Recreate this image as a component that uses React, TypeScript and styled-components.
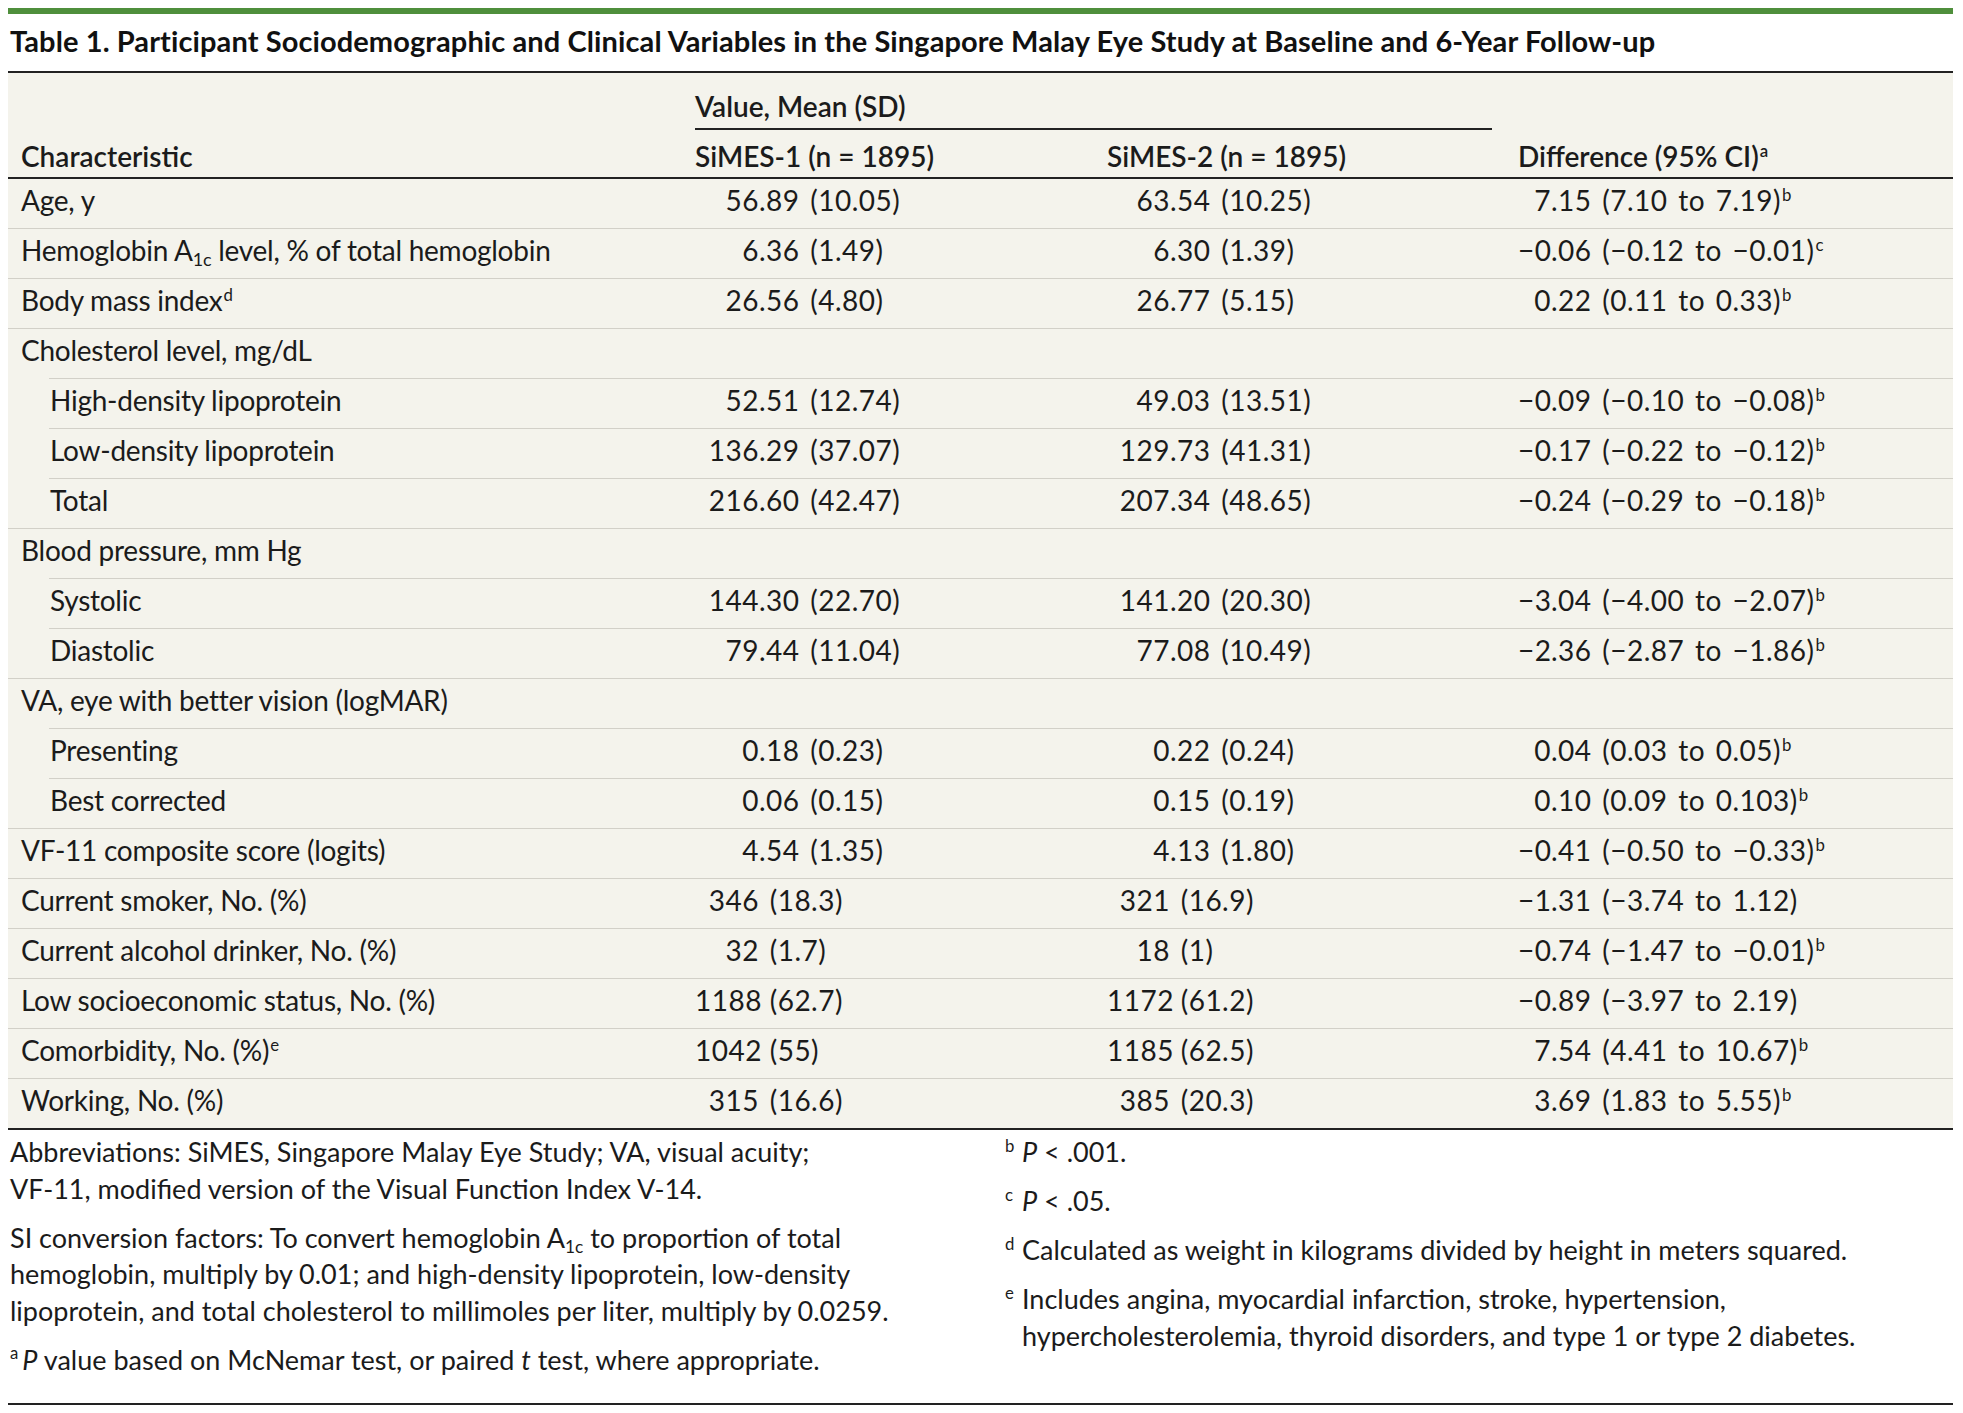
import React from "react";
import styled, { createGlobalStyle } from "styled-components";

const GlobalStyle = createGlobalStyle`
  html, body { margin: 0; padding: 0; background: #ffffff; }
  body {
    font-family: Lato, "Liberation Sans", sans-serif;
    color: #1b1b1b;
    -webkit-font-smoothing: antialiased;
  }
`;

const Page = styled.div`
  width: 1945px;
  margin-left: 8px;
  padding-top: 8px;
`;

const AccentBar = styled.div`
  height: 6px;
  background: #4f8f3c;
`;

const Title = styled.h1`
  margin: 10px 0 0 2px;
  font-size: 29px;
  line-height: 34px;
  font-weight: 700;
  letter-spacing: 0.1px;
  color: #111;
`;

const Table = styled.div`
  margin-top: 13px;
  border-top: 2px solid #222;
  border-bottom: 2px solid #222;
  background: #f4f3ec;
`;

const COLS = "687px 412px 411px 1fr";

const HeadGrid = styled.div`
  display: grid;
  grid-template-columns: ${COLS};
  grid-template-rows: auto auto;
  padding: 16px 0 4px;
  border-bottom: 2px solid #222;
  font-size: 28px;
  line-height: 34px;
  font-weight: 600;
`;

const SpanHead = styled.div`
  grid-column: 2 / span 2;
  grid-row: 1;
  margin-right: 26px;
  padding-bottom: 5px;
  border-bottom: 2px solid #222;
`;

const HeadLabel = styled.div<{ $col: number; $pad?: number }>`
  grid-column: ${(p) => p.$col};
  grid-row: 2;
  margin-top: 9px;
  padding-left: ${(p) => p.$pad ?? 0}px;
  white-space: nowrap;
`;

const RowRule = styled.div<{ $indent: boolean }>`
  height: 1px;
  margin-left: ${(p) => (p.$indent ? 41 : 0)}px;
  background: #d2d0c8;
`;

const RowGrid = styled.div`
  display: grid;
  grid-template-columns: ${COLS};
  align-items: center;
  height: 49px;
  box-sizing: border-box;
  padding-bottom: 7px;
  font-size: 28px;
  line-height: 34px;
  white-space: nowrap;
`;

const LabelCell = styled.div<{ $indent: boolean }>`
  padding-left: ${(p) => (p.$indent ? 42 : 13)}px;
  letter-spacing: -0.25px;
`;

const ValueCell = styled.div`
  display: flex;
  align-items: baseline;
  letter-spacing: 0.5px;
  word-spacing: 3px;
`;

const IntPart = styled.span<{ $w: number }>`
  display: inline-block;
  width: ${(p) => p.$w}px;
  text-align: right;
`;

const RestText = styled.span`
  white-space: pre;
`;

const Sup = styled.sup`
  font-size: 0.6em;
  line-height: 0;
  vertical-align: 0.62em;
  margin-left: 1px;
  letter-spacing: 0;
`;

const Sub = styled.sub`
  font-size: 0.64em;
  line-height: 0;
  vertical-align: -0.28em;
`;

const Notes = styled.div`
  display: grid;
  grid-template-columns: 997px 1fr;
  padding: 4px 0 25px;
  border-bottom: 2px solid #222;
  font-size: 27px;
  line-height: 36.5px;
`;

const NoteCol = styled.div<{ $pad: number }>`
  padding-left: ${(p) => p.$pad}px;
  display: flex;
  flex-direction: column;
  gap: 12.5px;
`;

const Note = styled.p<{ $hang?: boolean }>`
  margin: 0;
  white-space: nowrap;
  padding-left: ${(p) => (p.$hang ? 17 : 0)}px;
  text-indent: ${(p) => (p.$hang ? -17 : 0)}px;
`;

const Mark = styled.sup`
  display: inline-block;
  width: 17px;
  text-indent: 0;
  font-size: 0.62em;
  line-height: 0;
  vertical-align: 0.6em;
`;

const MarkInline = styled.sup`
  font-size: 0.62em;
  line-height: 0;
  vertical-align: 0.6em;
  margin-right: 4px;
`;

type Val = [string, string, string?];

interface RowData {
  label: React.ReactNode;
  indent?: boolean;
  v?: [Val, Val, Val];
}

const rows: RowData[] = [
  { label: "Age, y", v: [["56", ".89 (10.05)"], ["63", ".54 (10.25)"], ["7", ".15 (7.10 to 7.19)", "b"]] },
  {
    label: (
      <>
        Hemoglobin A<Sub>1c</Sub> level, % of total hemoglobin
      </>
    ),
    v: [["6", ".36 (1.49)"], ["6", ".30 (1.39)"], ["−0", ".06 (−0.12 to −0.01)", "c"]],
  },
  {
    label: (
      <>
        Body mass index<Sup>d</Sup>
      </>
    ),
    v: [["26", ".56 (4.80)"], ["26", ".77 (5.15)"], ["0", ".22 (0.11 to 0.33)", "b"]],
  },
  { label: "Cholesterol level, mg/dL" },
  { label: "High-density lipoprotein", indent: true, v: [["52", ".51 (12.74)"], ["49", ".03 (13.51)"], ["−0", ".09 (−0.10 to −0.08)", "b"]] },
  { label: "Low-density lipoprotein", indent: true, v: [["136", ".29 (37.07)"], ["129", ".73 (41.31)"], ["−0", ".17 (−0.22 to −0.12)", "b"]] },
  { label: "Total", indent: true, v: [["216", ".60 (42.47)"], ["207", ".34 (48.65)"], ["−0", ".24 (−0.29 to −0.18)", "b"]] },
  { label: "Blood pressure, mm Hg" },
  { label: "Systolic", indent: true, v: [["144", ".30 (22.70)"], ["141", ".20 (20.30)"], ["−3", ".04 (−4.00 to −2.07)", "b"]] },
  { label: "Diastolic", indent: true, v: [["79", ".44 (11.04)"], ["77", ".08 (10.49)"], ["−2", ".36 (−2.87 to −1.86)", "b"]] },
  { label: "VA, eye with better vision (logMAR)" },
  { label: "Presenting", indent: true, v: [["0", ".18 (0.23)"], ["0", ".22 (0.24)"], ["0", ".04 (0.03 to 0.05)", "b"]] },
  { label: "Best corrected", indent: true, v: [["0", ".06 (0.15)"], ["0", ".15 (0.19)"], ["0", ".10 (0.09 to 0.103)", "b"]] },
  { label: "VF-11 composite score (logits)", v: [["4", ".54 (1.35)"], ["4", ".13 (1.80)"], ["−0", ".41 (−0.50 to −0.33)", "b"]] },
  { label: "Current smoker, No. (%)", v: [["346", " (18.3)"], ["321", " (16.9)"], ["−1", ".31 (−3.74 to 1.12)"]] },
  { label: "Current alcohol drinker, No. (%)", v: [["32", " (1.7)"], ["18", " (1)"], ["−0", ".74 (−1.47 to −0.01)", "b"]] },
  { label: "Low socioeconomic status, No. (%)", v: [["1188", " (62.7)"], ["1172", " (61.2)"], ["−0", ".89 (−3.97 to 2.19)"]] },
  {
    label: (
      <>
        Comorbidity, No. (%)<Sup>e</Sup>
      </>
    ),
    v: [["1042", " (55)"], ["1185", " (62.5)"], ["7", ".54 (4.41 to 10.67)", "b"]],
  },
  { label: "Working, No. (%)", v: [["315", " (16.6)"], ["385", " (20.3)"], ["3", ".69 (1.83 to 5.55)", "b"]] },
];

const INT_WIDTHS = [64, 63, 33];

function Value({ val, w }: { val: Val; w: number }) {
  const [int, rest, sup] = val;
  return (
    <ValueCell>
      <IntPart $w={w}>{int}</IntPart>
      <RestText>
        {rest}
        {sup && <Sup>{sup}</Sup>}
      </RestText>
    </ValueCell>
  );
}

export default function App() {
  return (
    <>
      <GlobalStyle />
      <Page>
        <AccentBar />
        <Title>
          Table 1. Participant Sociodemographic and Clinical Variables in the Singapore Malay Eye Study at Baseline
          and 6-Year Follow-up
        </Title>
        <Table>
          <HeadGrid>
            <SpanHead>Value, Mean (SD)</SpanHead>
            <HeadLabel $col={1} $pad={13}>
              Characteristic
            </HeadLabel>
            <HeadLabel $col={2}>SiMES-1 (n = 1895)</HeadLabel>
            <HeadLabel $col={3}>SiMES-2 (n = 1895)</HeadLabel>
            <HeadLabel $col={4}>
              Difference (95% CI)<Sup>a</Sup>
            </HeadLabel>
          </HeadGrid>
          {rows.map((r, i) => (
            <div key={i}>
              {i > 0 && <RowRule $indent={!!r.indent} />}
              <RowGrid>
                <LabelCell $indent={!!r.indent}>{r.label}</LabelCell>
                {r.v ? (
                  r.v.map((val, j) => <Value key={j} val={val} w={INT_WIDTHS[j]} />)
                ) : (
                  <>
                    <div />
                    <div />
                    <div />
                  </>
                )}
              </RowGrid>
            </div>
          ))}
        </Table>
        <Notes>
          <NoteCol $pad={2}>
            <Note>
              Abbreviations: SiMES, Singapore Malay Eye Study; VA, visual acuity;
              <br />
              VF-11, modified version of the Visual Function Index V-14.
            </Note>
            <Note>
              SI conversion factors: To convert hemoglobin A<Sub>1c</Sub> to proportion of total
              <br />
              hemoglobin, multiply by 0.01; and high-density lipoprotein, low-density
              <br />
              lipoprotein, and total cholesterol to millimoles per liter, multiply by 0.0259.
            </Note>
            <Note>
              <MarkInline>a</MarkInline>
              <i>P</i> value based on McNemar test, or paired <i>t</i> test, where appropriate.
            </Note>
          </NoteCol>
          <NoteCol $pad={0}>
            <Note $hang>
              <Mark>b</Mark>
              <i>P</i> &lt; .001.
            </Note>
            <Note $hang>
              <Mark>c</Mark>
              <i>P</i> &lt; .05.
            </Note>
            <Note $hang>
              <Mark>d</Mark>
              Calculated as weight in kilograms divided by height in meters squared.
            </Note>
            <Note $hang>
              <Mark>e</Mark>
              Includes angina, myocardial infarction, stroke, hypertension,
              <br />
              hypercholesterolemia, thyroid disorders, and type 1 or type 2 diabetes.
            </Note>
          </NoteCol>
        </Notes>
      </Page>
    </>
  );
}
